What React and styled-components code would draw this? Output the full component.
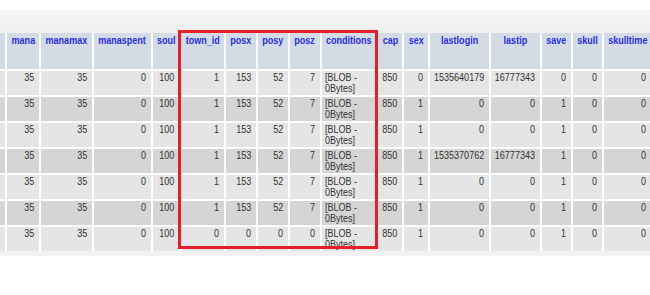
import React from 'react';
import styled, { createGlobalStyle } from 'styled-components';

const columns = [
  { key: 'edge', label: '', width: 5 },
  { key: 'mana', label: 'mana', width: 32 },
  { key: 'manamax', label: 'manamax', width: 51 },
  { key: 'manaspent', label: 'manaspent', width: 57 },
  { key: 'soul', label: 'soul', width: 26 },
  { key: 'town_id', label: 'town_id', width: 43 },
  { key: 'posx', label: 'posx', width: 30 },
  { key: 'posy', label: 'posy', width: 30 },
  { key: 'posz', label: 'posz', width: 30 },
  { key: 'conditions', label: 'conditions', width: 54, text: true },
  { key: 'cap', label: 'cap', width: 24 },
  { key: 'sex', label: 'sex', width: 24 },
  { key: 'lastlogin', label: 'lastlogin', width: 59 },
  { key: 'lastip', label: 'lastip', width: 49 },
  { key: 'save', label: 'save', width: 29 },
  { key: 'skull', label: 'skull', width: 29 },
  { key: 'skulltime', label: 'skulltime', width: 47 },
];

const tableWidth = columns.reduce((s, c) => s + c.width, 0) + (columns.length + 1) * 2;

const blob = '[BLOB -\n0Bytes]';

const rows = [
  ['', 35, 35, 0, 100, 1, 153, 52, 7, blob, 850, 0, 1535640179, 16777343, 0, 0, 0],
  ['', 35, 35, 0, 100, 1, 153, 52, 7, blob, 850, 1, 0, 0, 1, 0, 0],
  ['', 35, 35, 0, 100, 1, 153, 52, 7, blob, 850, 1, 0, 0, 1, 0, 0],
  ['', 35, 35, 0, 100, 1, 153, 52, 7, blob, 850, 1, 1535370762, 16777343, 1, 0, 0],
  ['', 35, 35, 0, 100, 1, 153, 52, 7, blob, 850, 1, 0, 0, 1, 0, 0],
  ['', 35, 35, 0, 100, 1, 153, 52, 7, blob, 850, 1, 0, 0, 1, 0, 0],
  ['', 35, 35, 0, 100, 0, 0, 0, 0, blob, 850, 1, 0, 0, 1, 0, 0],
];

const GlobalStyle = createGlobalStyle`
  html, body {
    margin: 0;
    padding: 0;
    background: #fff;
    overflow: hidden;
  }
  body {
    font-family: "Liberation Sans", Arial, sans-serif;
  }
`;

export default function App() {
  return (
    <>
      <GlobalStyle />
      <Page>
        <TopBand />
        <Grid style={{ width: tableWidth }}>
          <colgroup>
            {columns.map((c) => (
              <col key={c.key} style={{ width: c.width }} />
            ))}
          </colgroup>
          <thead>
            <tr>
              {columns.map((c) => (
                <HeadCell key={c.key}>
                  <Fit $align="center">
                    <Narrow $origin="center">{c.label}</Narrow>
                  </Fit>
                </HeadCell>
              ))}
            </tr>
          </thead>
          <tbody>
            {rows.map((r, i) => (
              <tr key={i}>
                {r.map((v, j) => {
                  const text = columns[j].text;
                  return (
                    <Cell key={j} $alt={i % 2 === 1} $text={text}>
                      <Fit $align={text ? 'flex-start' : 'flex-end'}>
                        <Narrow $origin={text ? 'left' : 'right'}>{v}</Narrow>
                      </Fit>
                    </Cell>
                  );
                })}
              </tr>
            ))}
          </tbody>
        </Grid>
        <BottomBand />
        <Highlight />
      </Page>
    </>
  );
}

const Page = styled.div`
  position: relative;
  width: 650px;
  height: 295px;
  padding-top: 10px;
  box-sizing: border-box;
  overflow: hidden;
`;

const TopBand = styled.div`
  height: 23px;
  background: linear-gradient(to bottom, #f6f6f6, #efefef);
`;

const Grid = styled.table`
  table-layout: fixed;
  border-collapse: separate;
  border-spacing: 2px;
  margin: -2px 0 0 -2px;
  font-size: 11px;
`;

const HeadCell = styled.th`
  box-sizing: border-box;
  height: 36px;
  padding: 2px 0 0;
  background: #d3dbe4;
  color: #2b2bef;
  font-weight: bold;
  vertical-align: top;
  line-height: 11px;
`;

const Cell = styled.td`
  box-sizing: border-box;
  height: 24px;
  padding: 1px ${(p) => (p.$text ? '0' : '5px')} 1px ${(p) => (p.$text ? '3px' : '0')};
  background: ${(p) => (p.$alt ? '#d5d5d5' : '#e5e5e5')};
  color: #333;
  vertical-align: top;
  line-height: 11px;
  overflow: hidden;
`;

const Fit = styled.div`
  display: flex;
  justify-content: ${(p) => p.$align};
`;

const Narrow = styled.span`
  display: inline-block;
  flex-shrink: 0;
  white-space: pre;
  transform: scaleX(0.82);
  transform-origin: ${(p) => p.$origin} top;
`;

const BottomBand = styled.div`
  height: 5px;
  margin-top: -2px;
  background: #f2f2f2;
`;

const Highlight = styled.div`
  position: absolute;
  left: 178px;
  top: 30px;
  width: 200px;
  height: 219px;
  box-sizing: border-box;
  border: 3px solid #e61e26;
  pointer-events: none;
`;
